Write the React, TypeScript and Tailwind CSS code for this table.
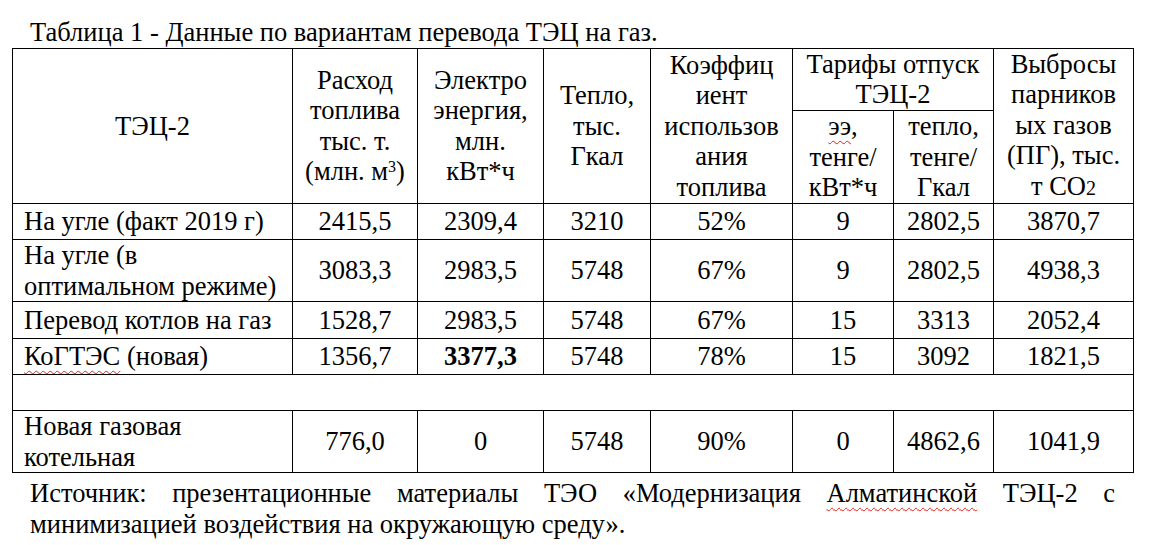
import React from 'react';

const td = 'border border-black p-0 text-center align-middle';
const wavy = 'underline decoration-wavy decoration-[#e0201b] decoration-1 underline-offset-[5px]';

interface DataRow {
  name: React.ReactNode;
  values: React.ReactNode[];
  h: string;
}

const rows: DataRow[] = [
  {
    name: 'На угле (факт 2019 г)',
    values: ['2415,5', '2309,4', '3210', '52%', '9', '2802,5', '3870,7'],
    h: 'h-[36px]',
  },
  {
    name: (
      <>
        На угле (в<br />
        оптимальном режиме)
      </>
    ),
    values: ['3083,3', '2983,5', '5748', '67%', '9', '2802,5', '4938,3'],
    h: 'h-[61px]',
  },
  {
    name: 'Перевод котлов на газ',
    values: ['1528,7', '2983,5', '5748', '67%', '15', '3313', '2052,4'],
    h: 'h-[37px]',
  },
  {
    name: (
      <>
        <span className={wavy}>КоГТЭС</span> (новая)
      </>
    ),
    values: ['1356,7', <b key="b">3377,3</b>, '5748', '78%', '15', '3092', '1821,5'],
    h: 'h-[36px]',
  },
];

export default function App() {
  return (
    <div className="w-[1153px] min-h-[545px] bg-white text-black font-['Liberation_Serif',serif] text-[26.5px] leading-[30.5px]">
      <div className="pt-[17px] pl-[30px]">Таблица 1 - Данные по вариантам перевода ТЭЦ на газ.</div>

      <table className="ml-[12px] w-[1121px] table-fixed border-collapse">
        <colgroup>
          <col className="w-[280px]" />
          <col className="w-[125px]" />
          <col className="w-[126px]" />
          <col className="w-[107px]" />
          <col className="w-[142px]" />
          <col className="w-[101px]" />
          <col className="w-[100px]" />
          <col className="w-[140px]" />
        </colgroup>
        <tbody>
          <tr className="h-[62px]">
            <td rowSpan={2} className={td}>ТЭЦ-2</td>
            <td rowSpan={2} className={td}>
              Расход<br />топлива<br />тыс. т.<br />(млн. м<sup className="text-[16px]">3</sup>)
            </td>
            <td rowSpan={2} className={td}>
              Электро<br />энергия,<br />млн.<br />кВт*ч
            </td>
            <td rowSpan={2} className={td}>
              Тепло,<br />тыс.<br />Гкал
            </td>
            <td rowSpan={2} className={td}>
              Коэффиц<br />иент<br />использов<br />ания<br />топлива
            </td>
            <td colSpan={2} className={td}>
              Тарифы отпуск<br />ТЭЦ-2
            </td>
            <td rowSpan={2} className={td}>
              Выбросы<br />парников<br />ых газов<br />(ПГ), тыс.<br />т CO<span className="text-[20px]">2</span>
            </td>
          </tr>
          <tr className="h-[92px]">
            <td className={td}>
              <span className={wavy}>ээ</span>,<br />тенге/<br />кВт*ч
            </td>
            <td className={td}>
              тепло,<br />тенге/<br />Гкал
            </td>
          </tr>

          {rows.map((r, i) => (
            <tr key={i} className={r.h}>
              <td className={`${td} !text-left pl-[11px]`}>{r.name}</td>
              {r.values.map((v, j) => (
                <td key={j} className={td}>{v}</td>
              ))}
            </tr>
          ))}

          <tr className="h-[36px]">
            <td colSpan={8} className={td}></td>
          </tr>

          <tr className="h-[62px]">
            <td className={`${td} !text-left pl-[11px]`}>
              Новая газовая<br />котельная
            </td>
            {['776,0', '0', '5748', '90%', '0', '4862,6', '1041,9'].map((v, j) => (
              <td key={j} className={td}>{v}</td>
            ))}
          </tr>
        </tbody>
      </table>

      <div className="pl-[30px] w-[1115px] pt-[5px]">
        <div className="text-justify [text-align-last:justify]">
          Источник: презентационные материалы ТЭО «Модернизация <span className={wavy}>Алматинской</span> ТЭЦ-2 с
        </div>
        <div>минимизацией воздействия на окружающую среду».</div>
      </div>
    </div>
  );
}
